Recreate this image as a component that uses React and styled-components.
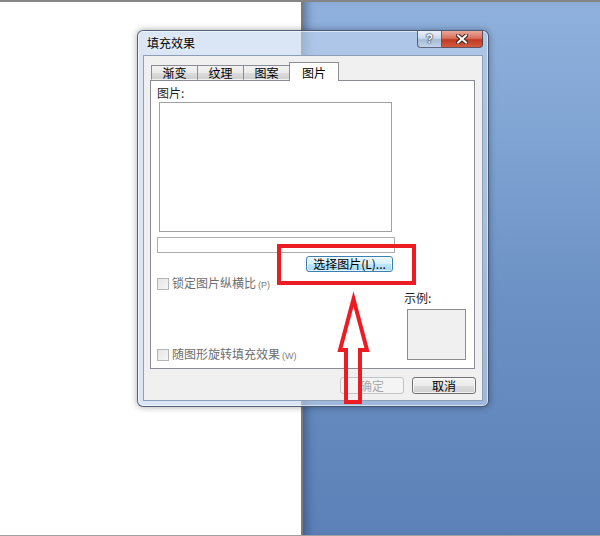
import React from 'react';
import styled, { createGlobalStyle } from 'styled-components';

const Global = createGlobalStyle`
  html, body { margin: 0; padding: 0; }
  body {
    width: 600px; height: 536px; overflow: hidden;
    font-family: "Noto Sans CJK SC", "Noto Sans", sans-serif;
  }
`;

const Desktop = styled.div`
  position: relative;
  width: 600px;
  height: 536px;
  display: flex;
  flex-direction: column;
  overflow: hidden;
`;
const TopEdge = styled.div`
  flex: none;
  height: 2px;
  background: #858585;
`;
const Main = styled.div`
  flex: 1;
  display: flex;
  min-height: 0;
`;
const Page = styled.div`
  flex: none;
  width: 301px;
  background: #fff;
`;
const Divider = styled.div`
  flex: none;
  width: 2px;
  background: #7b7b7b;
`;
const BluePane = styled.div`
  flex: 1;
  background: linear-gradient(180deg, #90b1dd 0%, #80a4d3 25%, #6c91c4 55%, #5b81b8 100%);
  box-shadow: inset 9px 0 8px -5px rgba(30, 50, 90, 0.45);
`;
const BottomEdge = styled.div`
  flex: none;
  height: 1px;
  background: #a0a0a0;
`;

const Dialog = styled.div`
  position: absolute;
  left: 137px;
  top: 30px;
  width: 352px;
  height: 377px;
  box-sizing: border-box;
  border: 1px solid rgba(40, 55, 80, 0.75);
  border-radius: 6px;
  background: rgba(195, 215, 240, 0.62);
  box-shadow: 0 0 7px rgba(0, 0, 0, 0.35), inset 0 0 0 1px rgba(255, 255, 255, 0.55);
  padding: 0 5px 5px 5px;
  display: flex;
  flex-direction: column;
`;
const TitleBar = styled.div`
  flex: none;
  height: 24px;
  display: flex;
  align-items: flex-start;
  justify-content: space-between;
`;
const Title = styled.div`
  padding: 5px 0 0 4px;
  font-size: 12px;
  line-height: 14px;
  color: #000;
  text-shadow: 0 0 6px rgba(255, 255, 255, 0.9);
`;
const CaptionButtons = styled.div`
  display: flex;
`;
const CapBtn = styled.div`
  width: ${p => p.$w}px;
  height: 17px;
  box-sizing: border-box;
  border: 1px solid rgba(50, 60, 80, 0.75);
  border-top: none;
  ${p => (p.$close ? 'border-left: none;' : '')}
  border-radius: ${p => (p.$close ? '0 0 4px 0' : '0 0 0 4px')};
  display: flex;
  align-items: center;
  justify-content: center;
  background: ${p =>
    p.$close
      ? 'linear-gradient(180deg, #eaa99b 0%, #d8705c 45%, #c03a24 55%, #d45a3f 100%)'
      : 'linear-gradient(180deg, rgba(238,244,251,0.92) 0%, rgba(205,219,236,0.92) 45%, rgba(165,185,210,0.92) 55%, rgba(195,213,233,0.92) 100%)'};
`;
const HelpGlyph = styled.span`
  font-family: "Liberation Sans", sans-serif;
  font-weight: bold;
  font-size: 12px;
  line-height: 12px;
  color: #fff;
  text-shadow: 0 0 1px #2a3548, 0 0 1px #2a3548, 0 0 2px #2a3548;
`;

const Client = styled.div`
  flex: 1;
  background: #f0f0f0;
  border: 1px solid #8e9fb5;
  padding: 6px 7px 6px 6px;
  display: flex;
  flex-direction: column;
  min-height: 0;
`;
const TabStrip = styled.div`
  flex: none;
  height: 19px;
  margin-bottom: -1px;
  padding-left: 1px;
  display: flex;
  align-items: flex-end;
  position: relative;
  z-index: 1;
`;
const Tab = styled.div`
  box-sizing: border-box;
  width: ${p => (p.$active ? 50 : 47)}px;
  height: ${p => (p.$active ? 19 : 15)}px;
  margin-bottom: ${p => (p.$active ? 0 : 1)}px;
  margin-left: ${p => (p.$first ? 0 : -1)}px;
  border: 1px solid #898c95;
  border-bottom: ${p => (p.$active ? 'none' : '1px solid transparent')};
  background: ${p => (p.$active ? '#fff' : 'linear-gradient(180deg, #f2f2f2 0%, #ebebeb 50%, #dddddd 51%, #cfcfcf 100%)')};
  font-size: 12px;
  line-height: 14px;
  color: #000;
  text-align: center;
  padding-top: ${p => (p.$active ? 3 : 0)}px;
  position: relative;
  z-index: ${p => (p.$active ? 2 : 1)};
`;
const Panel = styled.div`
  flex: 1;
  background: #fff;
  border: 1px solid #898c95;
  padding: 5px 7px 6px 6px;
  display: flex;
  flex-direction: column;
  min-height: 0;
`;
const Label = styled.div`
  font-size: 12px;
  line-height: 14px;
  color: #1e1e1e;
`;
const PictureBox = styled.div`
  box-sizing: border-box;
  margin: 2px 0 0 2px;
  width: 233px;
  height: 131px;
  border: 1px solid #a0a0a0;
  background: #fff;
`;
const NameField = styled.div`
  box-sizing: border-box;
  margin-top: 5px;
  width: 238px;
  height: 16px;
  border: 1px solid #abadb3;
  background: #fff;
`;
const ButtonRow = styled.div`
  margin-top: 3px;
  width: 238px;
  padding-right: 2px;
  box-sizing: border-box;
  display: flex;
  justify-content: flex-end;
`;
const PushButton = styled.div`
  box-sizing: border-box;
  width: ${p => p.$w}px;
  height: ${p => p.$h}px;
  border-radius: 3px;
  display: flex;
  align-items: center;
  justify-content: center;
  font-size: 12px;
  line-height: 14px;
  border: 1px solid ${p => (p.$variant === 'focus' ? '#3c7fb1' : p.$variant === 'disabled' ? '#c2c5c8' : '#707070')};
  color: ${p => (p.$variant === 'disabled' ? '#a8a8a8' : '#000')};
  background: ${p =>
    p.$variant === 'focus'
      ? 'linear-gradient(180deg, #eaf6fd 0%, #d9f0fc 50%, #bee6fd 51%, #a7d9f5 100%)'
      : p.$variant === 'disabled'
      ? '#f4f4f4'
      : 'linear-gradient(180deg, #f2f2f2 0%, #ebebeb 50%, #dddddd 51%, #cfcfcf 100%)'};
  box-shadow: ${p => (p.$variant === 'disabled' ? 'none' : 'inset 0 0 0 1px rgba(255,255,255,0.7)')};
`;
const Lower = styled.div`
  margin-top: 5px;
  display: flex;
  justify-content: space-between;
`;
const CheckColumn = styled.div`
  display: flex;
  flex-direction: column;
  justify-content: space-between;
`;
const CheckRow = styled.div`
  height: 14px;
  display: flex;
  align-items: center;
  gap: 3px;
  font-size: 12px;
  line-height: 14px;
  color: #6d6d6d;
`;
const CheckBox = styled.span`
  box-sizing: border-box;
  width: 12px;
  height: 12px;
  border: 1px solid #b5b5b5;
  background: linear-gradient(135deg, #e6e6e6 0%, #f6f6f6 100%);
`;
const Accel = styled.span`
  font-family: "Liberation Sans", sans-serif;
  font-size: 9px;
  color: #7a7a7a;
  margin-left: 2px;
`;
const SampleColumn = styled.div`
  width: 62px;
  margin-right: 1px;
  padding-top: 14px;
  display: flex;
  flex-direction: column;
`;
const SampleLabel = styled.div`
  font-size: 12px;
  line-height: 14px;
  color: #1e1e1e;
`;
const Preview = styled.div`
  box-sizing: border-box;
  margin: 4px 0 2px 3px;
  width: 59px;
  height: 51px;
  border: 1px solid #8c8c8c;
  background: #f0f0f0;
`;
const DialogButtons = styled.div`
  flex: none;
  margin-top: 8px;
  margin-right: -1px;
  display: flex;
  justify-content: flex-end;
  gap: 8px;
`;

const Highlight = styled.div`
  position: absolute;
  left: 277px;
  top: 244px;
  width: 139px;
  height: 41px;
  box-sizing: border-box;
  border: 4px solid #ec1c24;
`;
const ArrowSvg = styled.svg`
  position: absolute;
  left: 335px;
  top: 292px;
`;

export default function App() {
  return (
    <Desktop>
      <Global />
      <TopEdge />
      <Main>
        <Page />
        <Divider />
        <BluePane />
      </Main>
      <BottomEdge />

      <Dialog>
        <TitleBar>
          <Title>填充效果</Title>
          <CaptionButtons>
            <CapBtn $w={25}>
              <HelpGlyph>?</HelpGlyph>
            </CapBtn>
            <CapBtn $w={41} $close>
              <svg width="12" height="10" viewBox="0 0 12 10">
                <path d="M2 1.5 L10 8.5 M10 1.5 L2 8.5" stroke="#3a2020" strokeWidth="4" strokeLinecap="square" />
                <path d="M2 1.5 L10 8.5 M10 1.5 L2 8.5" stroke="#ffffff" strokeWidth="2" strokeLinecap="square" />
              </svg>
            </CapBtn>
          </CaptionButtons>
        </TitleBar>
        <Client>
          <TabStrip>
            <Tab $first>渐变</Tab>
            <Tab>纹理</Tab>
            <Tab>图案</Tab>
            <Tab $active>图片</Tab>
          </TabStrip>
          <Panel>
            <Label>图片:</Label>
            <PictureBox />
            <NameField />
            <ButtonRow>
              <PushButton $w={87} $h={16} $variant="focus">选择图片(L)...</PushButton>
            </ButtonRow>
            <Lower>
              <CheckColumn>
                <CheckRow>
                  <CheckBox />
                  <span>锁定图片纵横比<Accel>(P)</Accel></span>
                </CheckRow>
                <CheckRow>
                  <CheckBox />
                  <span>随图形旋转填充效果<Accel>(W)</Accel></span>
                </CheckRow>
              </CheckColumn>
              <SampleColumn>
                <SampleLabel>示例:</SampleLabel>
                <Preview />
              </SampleColumn>
            </Lower>
          </Panel>
          <DialogButtons>
            <PushButton $w={64} $h={17} $variant="disabled">确定</PushButton>
            <PushButton $w={64} $h={17}>取消</PushButton>
          </DialogButtons>
        </Client>
      </Dialog>

      <Highlight />
      <ArrowSvg width="40" height="116" viewBox="0 0 40 116">
        <polygon
          points="18.5,7 32,58 25,58 25,110 11,110 11,58 5,58"
          fill="none"
          stroke="#ec1c24"
          strokeWidth="4"
          strokeLinejoin="miter"
        />
      </ArrowSvg>
    </Desktop>
  );
}
